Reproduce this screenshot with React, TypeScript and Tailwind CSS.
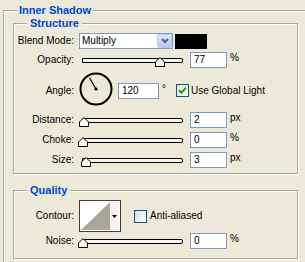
import type { ReactNode } from "react";

const sliderRows = [
  { label: "Distance:", value: "2", unit: "px", thumb: 0 },
  { label: "Choke:", value: "0", unit: "%", thumb: -1 },
  { label: "Size:", value: "3", unit: "px", thumb: 2 }
] as const;

function GroupBox({
  title,
  className,
  legendClassName,
  children
}: {
  title: string;
  className: string;
  legendClassName: string;
  children: ReactNode;
}) {
  return (
    <fieldset className={`border border-[#aca899] shadow-[inset_1px_1px_0_#fff,1px_1px_0_#fff] ${className}`}>
      <legend className={`bg-[#ECE9D8] text-[11px] font-bold leading-[13px] text-[#0046D5] ${legendClassName}`}>{title}</legend>
      {children}
    </fieldset>
  );
}

function Label({ children, className = "" }: { children: ReactNode; className?: string }) {
  return <span className={`w-[60px] shrink-0 text-right leading-[16px] ${className}`}>{children}</span>;
}

function Field({ value, className = "w-[37px]" }: { value: string; className?: string }) {
  return (
    <div className={`h-[16px] shrink-0 border border-[#7F9DB9] bg-white pl-[3px] leading-[14px] ${className}`}>{value}</div>
  );
}

function Unit({ children, className = "ml-[3px]" }: { children: ReactNode; className?: string }) {
  return <span className={`leading-[12px] ${className}`}>{children}</span>;
}

function Slider({ thumb }: { thumb: number }) {
  return (
    <div className="relative ml-[5px] h-[16px] w-[111px] shrink-0">
      <div className="ml-[3px] mt-[6px] h-[5px] w-[101px] rounded-r-[2px] border border-black bg-[#f4f3ec]" />
      <svg className="absolute top-[5px]" style={{ left: thumb }} width="10" height="10" viewBox="0 0 10 10">
        <polygon points="5,0.5 9.5,5 9.5,9.5 0.5,9.5 0.5,5" fill="#fbfaf4" stroke="#000" strokeWidth="1" />
      </svg>
    </div>
  );
}

function SliderRow({ label, value, unit, thumb, className }: { label: string; value: string; unit: string; thumb: number; className: string }) {
  return (
    <div className={`flex items-start ${className}`}>
      <Label>{label}</Label>
      <Slider thumb={thumb} />
      <Field value={value} />
      <Unit>{unit}</Unit>
    </div>
  );
}

function Checkbox({ checked }: { checked: boolean }) {
  return (
    <div className="flex h-[13px] w-[13px] shrink-0 items-center justify-center border border-[#1C5180] bg-gradient-to-br from-[#dcdcd7] to-white">
      {checked ? (
        <svg width="9" height="9" viewBox="0 0 9 9">
          <path d="M1 4.2 L3.4 6.8 L8 1.8" fill="none" stroke="#21A121" strokeWidth="2" />
        </svg>
      ) : null}
    </div>
  );
}

export default function App() {
  return (
    <div className="h-[262px] w-[305px] overflow-hidden bg-[#ECE9D8] pt-[4px] font-['Liberation_Sans',Arial,sans-serif] text-[10px] text-black">
      <GroupBox title="Inner Shadow" className="ml-[3px] w-[305px]" legendClassName="ml-[13px] px-[2px]">
        <div className="pb-[12px] pl-[9px]">
          <GroupBox title="Structure" className="w-[285px]" legendClassName="ml-[13px] px-[3px]">
            <div className="flex flex-col pb-[5px] pt-[3px]">
              <div className="flex items-center">
                <Label>Blend Mode:</Label>
                <div className="ml-[5px] flex h-[16px] w-[94px] items-center border border-[#7F9DB9] bg-white pl-[2px]">
                  <span className="flex-1 leading-[14px]">Multiply</span>
                  <div className="flex h-[14px] w-[15px] items-center justify-center rounded-[2px] border border-[#bccbf0] bg-gradient-to-b from-[#dde6fd] to-[#b6c8f5]">
                    <svg width="8" height="6" viewBox="0 0 8 6">
                      <path d="M1 1 L4 4 L7 1" fill="none" stroke="#4D6185" strokeWidth="2" />
                    </svg>
                  </div>
                </div>
                <div className="ml-[2px] h-[15px] w-[32px] bg-black" />
              </div>

              <SliderRow label="Opacity:" value="77" unit="%" thumb={76} className="mt-[3px]" />

              <div className="mt-[4px] flex items-start">
                <Label className="mt-[11px]">Angle:</Label>
                <svg className="ml-[5px] shrink-0" width="34" height="34" viewBox="0 0 34 34">
                  <circle cx="17" cy="17" r="15.5" fill="none" stroke="#000" strokeWidth="2" />
                  <line x1="17" y1="17" x2="10.5" y2="5.8" stroke="#000" strokeWidth="1.2" />
                  <circle cx="17" cy="17" r="1.6" fill="#000" />
                </svg>
                <Field value="120" className="ml-[5px] mt-[11px] w-[41px]" />
                <Unit className="ml-[3px] mt-[11px]">°</Unit>
                <div className="ml-[10px] mt-[12px]">
                  <Checkbox checked />
                </div>
                <span className="ml-[2px] mt-[11px] leading-[16px]">Use Global Light</span>
              </div>

              {sliderRows.map((row, index) => (
                <SliderRow
                  key={row.label}
                  label={row.label}
                  value={row.value}
                  unit={row.unit}
                  thumb={row.thumb}
                  className={index === 0 ? "mt-[6px]" : "mt-[4px]"}
                />
              ))}
            </div>
          </GroupBox>

          <GroupBox title="Quality" className="mt-[10px] w-[285px]" legendClassName="ml-[13px] px-[3px]">
            <div className="flex flex-col pb-[9px] pt-[3px]">
              <div className="flex items-center">
                <Label>Contour:</Label>
                <div className="ml-[5px] flex h-[32px] w-[42px] shrink-0 border border-[#404040] bg-white p-[1px]">
                  <svg width="29" height="28" viewBox="0 0 29 28">
                    <rect width="29" height="28" fill="#fff" />
                    <polygon points="0,28 29,0 29,28" fill="#aaa69a" />
                  </svg>
                  <div className="flex flex-1 items-center justify-center bg-[#f4f3ee]">
                    <svg width="5" height="3" viewBox="0 0 5 3">
                      <polygon points="0,0 5,0 2.5,3" fill="#000" />
                    </svg>
                  </div>
                </div>
                <div className="ml-[13px]">
                  <Checkbox checked={false} />
                </div>
                <span className="ml-[3px] leading-[16px]">Anti-aliased</span>
              </div>

              <SliderRow label="Noise:" value="0" unit="%" thumb={-1} className="mt-[1px]" />
            </div>
          </GroupBox>
        </div>
      </GroupBox>
    </div>
  );
}
